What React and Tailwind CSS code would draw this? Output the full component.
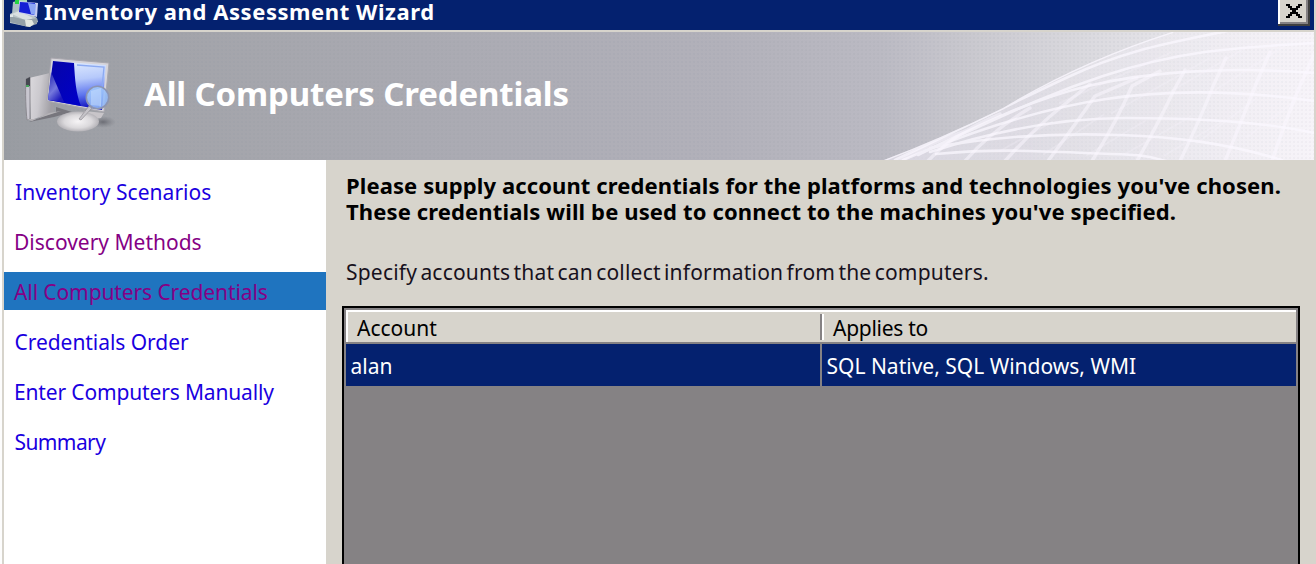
import React from "react";

const steps = [
  { label: "Inventory Scenarios", style: "text-[#1a00e0] tracking-[0.03px] pl-[11px]" },
  { label: "Discovery Methods", style: "text-[#850085] pl-[10px]" },
  { label: "All Computers Credentials", style: "text-[#850085] tracking-[-0.1px] pl-[10px] bg-[#1f74bf]" },
  { label: "Credentials Order", style: "text-[#1a00e0] tracking-[-0.05px] pl-[10.5px]" },
  { label: "Enter Computers Manually", style: "text-[#1a00e0] tracking-[-0.15px] pl-[10px]" },
  { label: "Summary", style: "text-[#1a00e0] tracking-[-0.6px] pl-[10.5px]" },
];

function TitleIcon() {
  return (
    <svg className="shrink-0" width="40" height="30" viewBox="4 0 40 30">
      <path d="M13 2 21 0v12l-9 2Z" fill="#aebfc4" />
      <path d="M19 0h8v3h-8Z" fill="#a9dcb4" />
      <path d="M15 0h4v4h-4Z" fill="#25d443" />
      <path d="M10 14 18 10l10 2 9 6 1 4-9 5-19-4Z" fill="#b9c5c8" />
      <path d="m12 14 7-3 14 7-6 3Z" fill="#d9e0e1" />
      <path d="m10 16 16 4 11-2v6l-9 3-18-5Z" fill="#95a2a8" />
      <path d="m25 20 7 0 2 4-4 3-4-1Z" fill="#e3e8e0" />
      <path d="m19 1 19 2-1 14-18-4Z" fill="#c8cff0" />
      <path d="m20 2 15 1-1 12-15-3Z" fill="#1420d5" />
      <path d="m28 3 8 1-1 11-4-1Z" fill="#8ba6f6" />
      <path d="m10 15 3-1v3h-3Z" fill="#dfe6e8" />
    </svg>
  );
}

function ComputerIcon() {
  return (
    <svg className="shrink-0" width="100" height="90" viewBox="18 50 100 90">
      <defs>
        <linearGradient id="tower" x1="0" x2="1" y2=".25">
          <stop stopColor="#dddbdf" /><stop offset=".5" stopColor="#cbc9ce" /><stop offset="1" stopColor="#a09ea4" />
        </linearGradient>
        <linearGradient id="gloss" x1="0.3" y1="0" x2=".45" y2="1">
          <stop stopColor="#e2edff" /><stop offset=".4" stopColor="#b6c9fb" /><stop offset=".72" stopColor="#5d74ee" /><stop offset="1" stopColor="#1010bd" />
        </linearGradient>
        <linearGradient id="blue" x1="0" x2="1" y2="1">
          <stop stopColor="#0605a6" /><stop offset="1" stopColor="#0000cb" />
        </linearGradient>
        <linearGradient id="corner" x1="0" x2=".6" y1="0" y2="1">
          <stop stopColor="#1b1daf" /><stop offset=".6" stopColor="#7478dc" /><stop offset="1" stopColor="#1b18bc" />
        </linearGradient>
        <radialGradient id="base"><stop stopColor="#f6f4f6" /><stop offset=".65" stopColor="#dbd9dc" /><stop offset="1" stopColor="#b5b3b8" /></radialGradient>
        <radialGradient id="shade"><stop stopColor="#5f6068" stopOpacity=".8" /><stop offset="1" stopColor="#777981" stopOpacity="0" /></radialGradient>
        <linearGradient id="lens" x2="1" y2="1"><stop stopColor="#a8cffd" /><stop offset="1" stopColor="#8db4f7" /></linearGradient>
      </defs>
      <ellipse cx="103" cy="122" rx="13" ry="6" fill="url(#shade)" />
      <path d="m31 121 25-9v-5l16 5-18 5-25 5Z" fill="#77767d" />
      <path d="m29 78 21-5 4 39-23 8Z" fill="url(#tower)" />
      <path d="m26 79 4-2v42l-3 1c-1-8-2-28-1-41Z" fill="#c8c6cf" stroke="#8b8990" strokeWidth="1" />
      <path d="m26 79 4-2v9l-4 1Z" fill="#464851" />
      <path d="M26 85h3v2h-3Z" fill="#47a35c" />
      <path d="m27 119 5 2 17-8 12-2-25 8Z" fill="#b5b2b6" />
      <path d="m51 58 58 5-5 49-57-11Z" fill="#d6d4d9" stroke="#a9a7ae" />
      <path d="m53 61 53 4-4 45-54-10Z" fill="url(#gloss)" />
      <path d="m53 61 21 2c1 17 2 31 7 43l-33-6Z" fill="url(#blue)" />
      <path d="m51 72 13 30-16-2Z" fill="url(#corner)" />
      <path d="m77 65 27 2-4 42" fill="none" stroke="#8caaf2" strokeWidth="1.3" />
      <path d="m84 111 20 2-3 5-18 3Z" fill="#c8c5c9" />
      <ellipse cx="78" cy="121.5" rx="21" ry="10" fill="url(#base)" />
      <path d="m89 106 3 2-11 12-2-1Z" fill="#c5c3c8" stroke="#89878d" strokeWidth=".6" />
      <circle cx="97.5" cy="97.5" r="11.2" fill="url(#lens)" fillOpacity=".88" stroke="#8c95b2" strokeWidth="1.6" />
      <path d="m91 91 10-3v18l-10-1Z" fill="#d6e8ff" opacity=".4" />
    </svg>
  );
}

function GlobeLines() {
  return (
    <svg className="shrink-0" width="444" height="128" viewBox="870 32 444 128">
      <defs>
        <linearGradient id="globe"><stop stopColor="#eeeaf5" stopOpacity=".6" /><stop offset=".35" stopColor="#f1edf7" stopOpacity=".4" /><stop offset="1" stopColor="#fffaff" stopOpacity=".2" /></linearGradient>
        <clipPath id="disc"><path d="M884 160Q940 139 1003 108Q1081 61 1172 32H1314V160Z" /></clipPath>
      </defs>
      <path d="M884 160Q940 139 1003 108Q1081 61 1172 32H1314V160Z" fill="url(#globe)" />
      <g clipPath="url(#disc)" fill="none" stroke="#fbf8ff" strokeLinecap="round">
        <g strokeWidth="2.6" opacity=".72">
          <path d="M884 160Q940 139 1003 108Q1081 61 1172 32" />
          <path d="M895 160C960 129 1008 105 1068 77S1170 43 1232 30" />
          <path d="M903 160C983 127 1027 101 1103 76S1228 48 1314 43" />
          <path d="M918 155C981 124 1030 100 1088 86S1226 66 1314 73" />
          <path d="M925 151C995 123 1052 107 1106 99S1230 89 1314 101" />
          <path d="M930 152C1000 129 1064 118 1126 118S1260 121 1314 133" />
          <path d="M930 148C1000 135 1063 133 1120 135S1226 143 1282 160" />
          <path d="M936 154C1008 147 1070 153 1111 154S1152 158 1170 162" />
        </g>
        <g strokeWidth="3.4" opacity=".5">
          <path d="M900 161Q934 141 968 130" />
          <path d="M928 161Q954 133 1000 114" />
          <path d="M965 161Q991 131 1030 108" />
          <path d="M1005 161Q1035 128 1060 108L1090 84" />
          <path d="M1048 161Q1075 125 1095 96L1137 78" />
          <path d="M1092 161Q1117 121 1132 86L1160 71" />
          <path d="M1137 161Q1159 122 1174 90L1185 70" />
          <path d="M1180 161Q1199 122 1214 84L1226 58" />
          <path d="M1225 161Q1242 120 1256 84L1270 52" />
          <path d="M1272 161Q1285 122 1299 88L1316 50" />
        </g>
        <g strokeWidth="2" opacity=".22">
          <path d="m1000 151 52-29M1044 154l59-39M1087 155l58-34M1125 154l65-37M1165 155l60-35M1197 143l60-45M1247 137l63-47M1060 103l110-50M1112 113l98-55M1168 93l86-50M1212 92l90-57" />
        </g>
      </g>
    </svg>
  );
}

function TitleBar() {
  return (
    <div className="flex h-[30px] shrink-0 items-start bg-[#04216f]">
      <TitleIcon />
      <h1 className="grow whitespace-nowrap text-[22px] font-bold leading-[23px] tracking-[0.56px] text-white">Inventory and Assessment Wizard</h1>
      <button aria-label="Close" className="mr-1 flex h-[26px] w-8 items-start border-b-2 border-r-2 border-[#404040] bg-white pl-[2px]">
        <span className="flex h-6 w-7 border-b-2 border-r-2 border-[#858284] bg-[#d7d4cc] pl-[6px] pt-1">
          <svg width="16" height="14" viewBox="0 0 16 14" shapeRendering="crispEdges">
            <path d="M0 0h4v2h2v2h4V2h2V0h4v2h-2v2h-2v2h-2v2h2v2h2v2h2v2h-4v-2h-2v-2H6v2H4v2H0v-2h2v-2h2V8h2V6H4V4H2V2H0Z" fill="#000" />
          </svg>
        </span>
      </button>
    </div>
  );
}

function Banner() {
  return (
    <header className="flex h-32 shrink-0 overflow-hidden bg-[linear-gradient(90deg,#999ca2_0%,#a3a4aa_13%,#aaaab2_32%,#b2b1ba_55%,#bbbac3_67%,#cccbd1_75%,#dddce1_84%,#eeecf1_94%,#f5f2f7_100%)]">
      <div className="flex h-full w-full bg-[radial-gradient(circle,rgba(118,132,145,0.07)_0.7px,transparent_0.9px)] bg-[length:4px_4px]">
        <div className="ml-[14px] mt-[18px] shrink-0"><ComputerIcon /></div>
        <h2 className="ml-[26px] mt-[37px] grow whitespace-nowrap text-[33px] font-bold leading-[50px] tracking-[-0.15px] text-white">All Computers Credentials</h2>
        <GlobeLines />
      </div>
    </header>
  );
}

function Sidebar() {
  return (
    <nav className="flex w-[322px] shrink-0 flex-col gap-3 bg-white pt-3">
      {steps.map((s) => (
        <a key={s.label} className={"block h-[38px] whitespace-nowrap text-[21px] leading-[40px] " + s.style}>{s.label}</a>
      ))}
    </nav>
  );
}

function AccountsTable() {
  return (
    <div className="mt-[21px] flex w-[958px] grow flex-col border-2 border-b-0 border-black bg-[#858284] px-[2px] pt-[2px] text-[21px]">
      <div className="flex h-8 shrink-0 border-l-2 border-t-2 border-white bg-[#d7d4cc] text-black">
        <div className="w-[472px] pl-[9px] leading-[32px]">Account</div>
        <div className="my-[2px] w-1 border-l-2 border-r-2 border-l-[#858284] border-r-white" />
        <div className="pl-[9px] leading-[32px] tracking-[-0.27px]">Applies to</div>
      </div>
      <div className="mt-[2px] flex h-[42px] shrink-0 gap-[2px] leading-[44px] text-white">
        <div className="w-[474px] bg-[#04216f] pl-[4.5px]">alan</div>
        <div className="grow bg-[#04216f] pl-[4.5px]">SQL Native, SQL Windows, WMI</div>
      </div>
    </div>
  );
}

export default function App() {
  return (
    <div className="flex h-[564px] w-[1316px] flex-col overflow-hidden border-l-2 border-l-[#fdfdfd] border-r-2 border-r-[#d7d4cc] bg-[#d7d4cc] pl-[2px] font-['Noto_Sans',sans-serif]">
      <TitleBar />
      <div className="h-[2px] shrink-0 bg-[#d7d4cc]" />
      <Banner />
      <div className="flex grow">
        <Sidebar />
        <main className="flex flex-col pl-4">
          <div className="mt-3 whitespace-nowrap pl-[4px] text-[22px] font-bold leading-[26px] text-black">
            <p className="tracking-[0.11px]">Please supply account credentials for the platforms and technologies you've chosen.</p>
            <p className="tracking-[0.13px]">These credentials will be used to connect to the machines you've specified.</p>
          </div>
          <p className="mt-[35px] whitespace-nowrap pl-[4px] text-[21px] leading-[26px] tracking-[0.2px] text-[#17111d] [word-spacing:-2.4px]">Specify accounts that can collect information from the computers.</p>
          <AccountsTable />
        </main>
      </div>
    </div>
  );
}
